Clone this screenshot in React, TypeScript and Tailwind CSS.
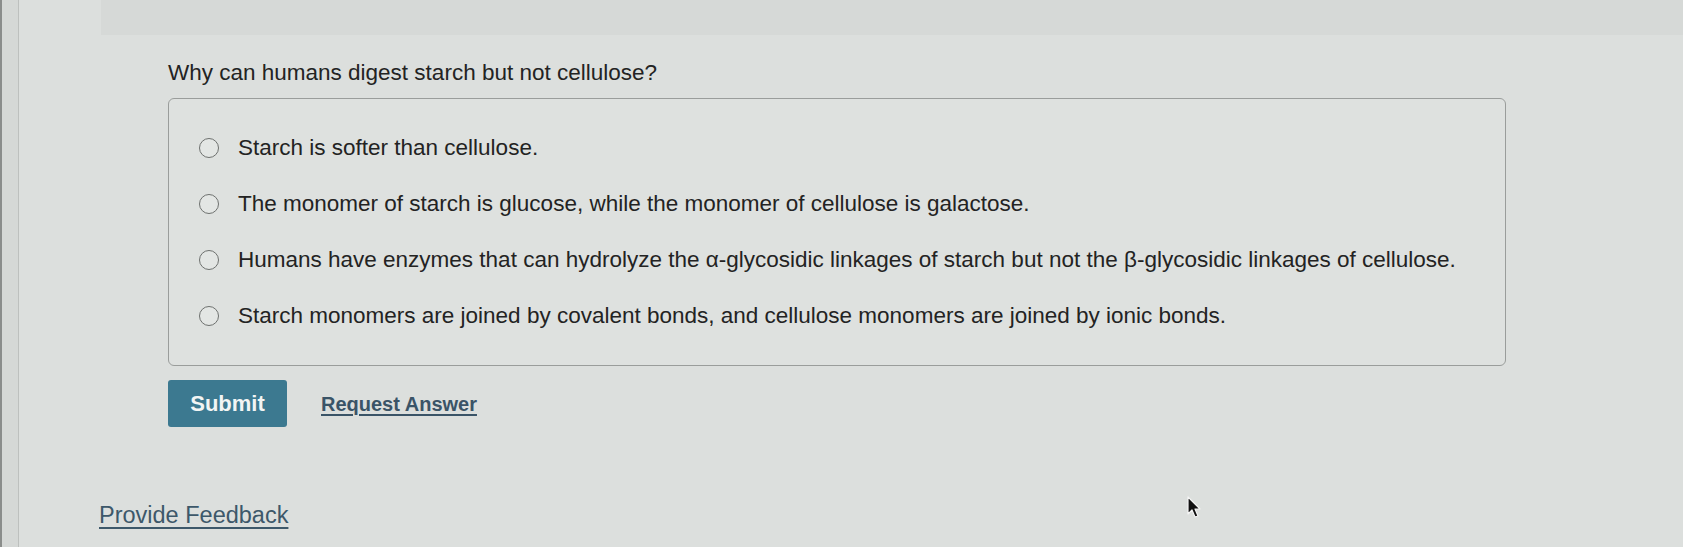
import React from 'react';

const options = [
  'Starch is softer than cellulose.',
  'The monomer of starch is glucose, while the monomer of cellulose is galactose.',
  'Humans have enzymes that can hydrolyze the α-glycosidic linkages of starch but not the β-glycosidic linkages of cellulose.',
  'Starch monomers are joined by covalent bonds, and cellulose monomers are joined by ionic bonds.',
];

function Pointer() {
  return (
    <svg width="16" height="24" viewBox="0 0 16 24" className="absolute left-[1186px] top-[496px]">
      <path d="M2 1 L2 18 L6 14 L9 21 L12 20 L9 13 L14 13 Z" fill="#111" stroke="#f4f4f4" strokeWidth="1.2" strokeLinejoin="round" />
    </svg>
  );
}

export default function App() {
  return (
    <div
      className="relative flex h-[547px] w-full overflow-hidden bg-[#dcdfdd] text-[#232323]"
      style={{ fontFamily: '"Liberation Sans", Arial, sans-serif' }}
    >
      <div className="w-[19px] shrink-0 border-l-2 border-r border-l-[#8a8d8b] border-r-[#bdc0be] bg-[#d5d8d6]" />
      <div className="flex min-w-0 flex-1 flex-col">
        <div className="ml-[82px] h-[35px] bg-[#d6d9d7]" />
        <div className="pl-[149px] pr-[177px]">
          <h1 className="mt-[25px] text-[22.5px] leading-[26px]">Why can humans digest starch but not cellulose?</h1>

          <div className="mt-[12px] rounded-md border border-[#9a9d9b] bg-[#dee1df] py-[21px] pl-[30px]">
            {options.map((text) => (
              <label key={text} className="flex h-[56px] items-center gap-[19px]">
                <span className="h-[20px] w-[20px] shrink-0 rounded-full border-[1.5px] border-[#6e716f] bg-[#e3e6e4]" />
                <span className="text-[22.5px] leading-[26px]">{text}</span>
              </label>
            ))}
          </div>

          <div className="mt-[14px] flex items-center gap-[34px]">
            <button className="h-[47px] w-[119px] rounded-[3px] bg-[#3c7990] text-[22px] font-bold text-[#f2f5f4]">
              Submit
            </button>
            <a className="text-[20px] font-bold text-[#3a5467] underline underline-offset-[3px]">Request Answer</a>
          </div>
        </div>

        <div className="ml-[80px] mt-[71px]">
          <a className="text-[23.5px] text-[#3d586a] underline underline-offset-[4px]">Provide Feedback</a>
        </div>
      </div>
      <Pointer />
    </div>
  );
}
